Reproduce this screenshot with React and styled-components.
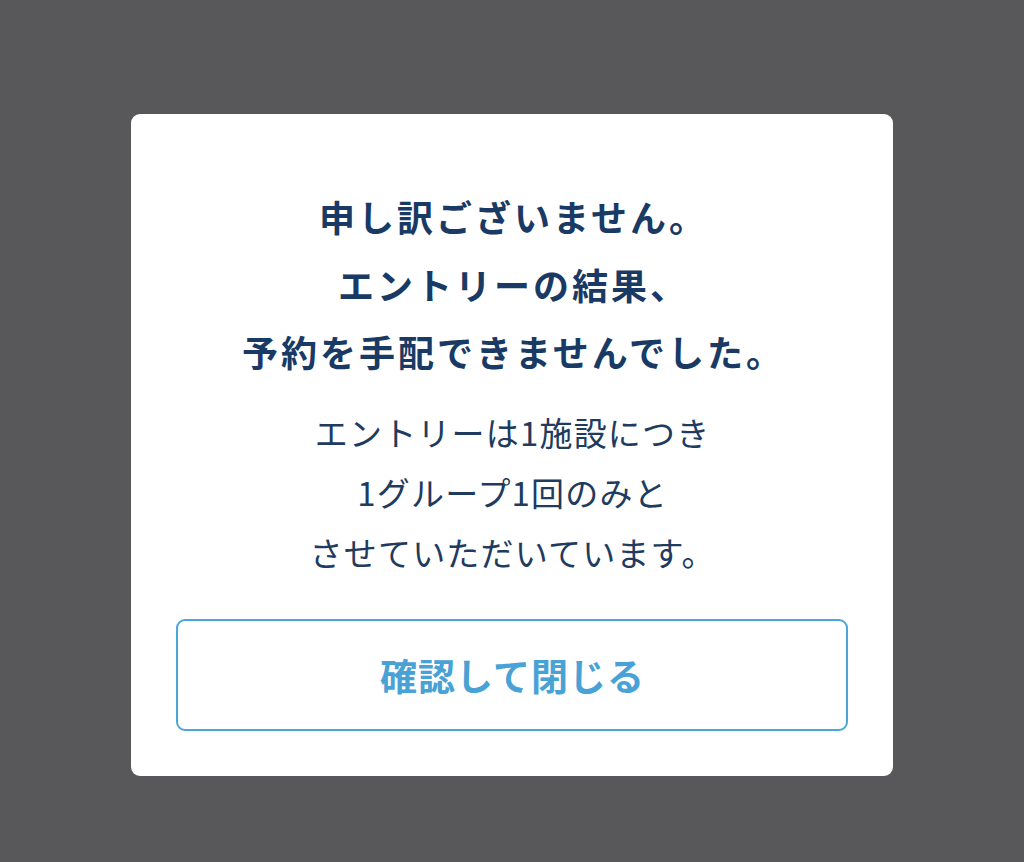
import React from "react";
import styled, { createGlobalStyle } from "styled-components";

const GlobalStyle = createGlobalStyle`
  html, body {
    margin: 0;
    padding: 0;
    background: #58585a;
  }
  body {
    font-family: "Noto Sans CJK JP", "Noto Sans", sans-serif;
  }
`;

const Overlay = styled.div`
  min-height: 862px;
  box-sizing: border-box;
  display: flex;
  justify-content: center;
  align-items: flex-start;
  padding-top: 114px;
  background: #58585a;
`;

const Dialog = styled.div`
  width: 762px;
  box-sizing: border-box;
  padding: 69px 45px 45px;
  background: #ffffff;
  border-radius: 9px;
  display: flex;
  flex-direction: column;
  align-items: center;
`;

const Title = styled.h2`
  margin: 0;
  padding-left: 3px;
  font-size: 36px;
  line-height: 67.5px;
  letter-spacing: 3px;
  font-weight: 700;
  color: #193a64;
  text-align: center;
`;

const Message = styled.p`
  margin: 16px 0 0;
  padding-left: 1.2px;
  font-size: 33px;
  line-height: 60px;
  letter-spacing: 1.2px;
  font-weight: 400;
  color: #213b5e;
  text-align: center;
`;

const CloseButton = styled.button`
  margin-top: 37px;
  width: 100%;
  height: 112px;
  box-sizing: border-box;
  padding: 0 0 0 1px;
  background: #ffffff;
  border: 2px solid #4ba6d9;
  border-radius: 9px;
  font-family: inherit;
  font-size: 37px;
  letter-spacing: 1px;
  font-weight: 700;
  color: #48a2d6;
  cursor: pointer;
`;

export default function App() {
  return (
    <>
      <GlobalStyle />
      <Overlay>
        <Dialog>
          <Title>
            申し訳ございません。
            <br />
            エントリーの結果、
            <br />
            予約を手配できませんでした。
          </Title>
          <Message>
            エントリーは1施設につき
            <br />
            1グループ1回のみと
            <br />
            させていただいています。
          </Message>
          <CloseButton>確認して閉じる</CloseButton>
        </Dialog>
      </Overlay>
    </>
  );
}
